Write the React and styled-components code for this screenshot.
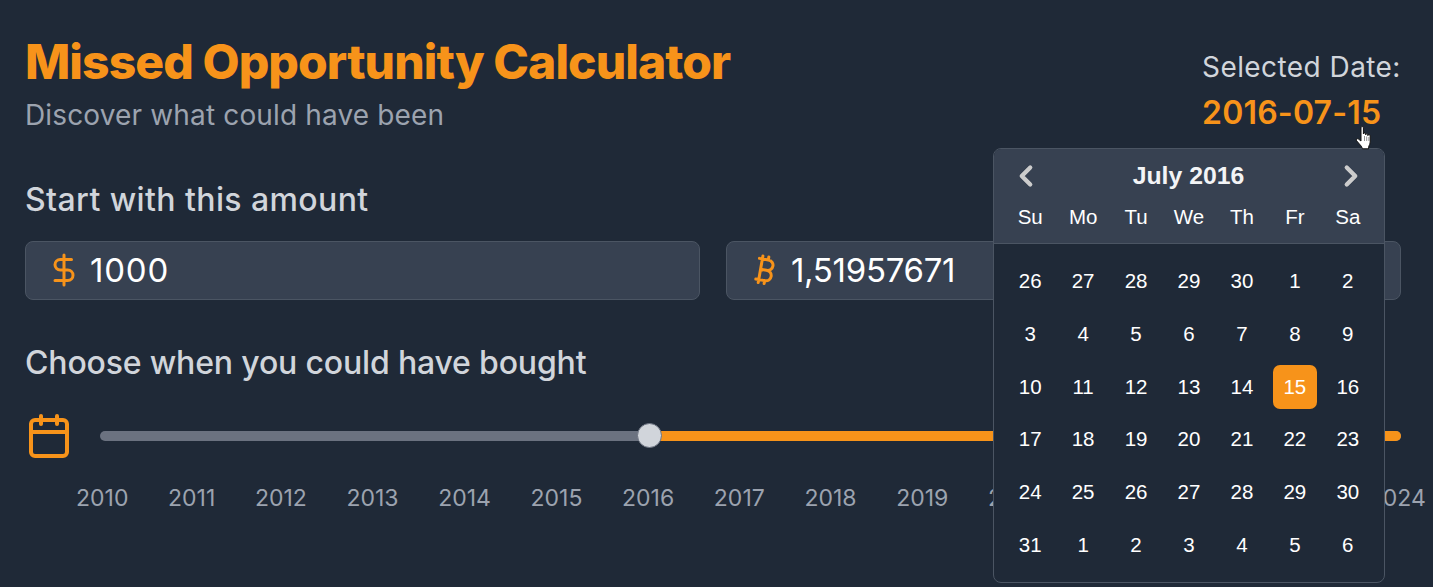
import React from 'react';
import styled, { createGlobalStyle } from 'styled-components';
import { Bitcoin, Calendar, ChevronLeft, ChevronRight, DollarSign } from 'lucide-react';

const orange = "#f7931a"
const panel = "#374151"
const line = "#4b5563"
const page = "#1f2937"

const Global = createGlobalStyle`
  html, body {
    margin: 0;
    height: 100%;
    overflow: hidden;
    background: ${page};
  }
`
const Page = styled.div`
  position: relative;
  width: 1433px;
  height: 587px;
  box-sizing: border-box;
  padding: 35px 32px 0 25px;
  font-family: Inter, sans-serif;
  color: #d1d5db;
`
const Header = styled.header`
  display: flex;
  justify-content: space-between;
  align-items: flex-start;
`
const Title = styled.h1`
  margin: 0;
  color: ${orange};
  font-size: 48px;
  line-height: 54px;
  font-weight: 800;
  letter-spacing: -0.91px;
`
const Tagline = styled.p`
  margin: 8px 0 0;
  color: #9ca3af;
  font-size: 28px;
  line-height: 36px;
  letter-spacing: 0.15px;
`
const DateBox = styled.div`
  width: 199px;
  padding-top: 14px;
`
const DateLabel = styled.div`
  font-size: 28px;
  line-height: 36px;
  letter-spacing: 0.43px;
  white-space: nowrap;
`
const DateValue = styled.div`
  margin-top: 10px;
  color: ${orange};
  font-size: 32px;
  line-height: 36px;
  font-weight: 600;
  letter-spacing: 0.2px;
  white-space: nowrap;
`
const Section = styled.h2`
  margin: ${p => p.$top}px 0 0;
  font-size: 32px;
  line-height: 40px;
  font-weight: 500;
  letter-spacing: ${p => p.$track}px;
`
const Inputs = styled.div`
  display: grid;
  grid-template-columns: 1fr 1fr;
  gap: 26px;
  margin-top: 21px;
`
const Field = styled.div`
  display: flex;
  align-items: center;
  gap: 8px;
  height: 59px;
  box-sizing: border-box;
  padding: 0 0 2px 20px;
  background: ${panel};
  border: 1px solid ${line};
  border-radius: 8px;
  color: #fff;
  font-size: 33px;
  letter-spacing: ${p => p.$track}px;
`
const FieldIcon = styled.span`
  display: flex;
  justify-content: center;
  flex: none;
  width: 36px;
  color: ${orange};
`
const SliderRow = styled.div`
  display: flex;
  align-items: center;
  gap: 27px;
  margin-top: 29px;
  svg { color: ${orange}; flex: none; }
`
const Track = styled.div`
  position: relative;
  flex: 1;
  height: 10px;
  background: #6b7280;
  border-radius: 5px;
`
const Fill = styled.div`
  position: absolute;
  top: 0;
  right: 0;
  bottom: 0;
  background: ${orange};
  border-radius: 0 5px 5px 0;
`
const Thumb = styled.div`
  position: absolute;
  top: -8px;
  width: 25px;
  height: 25px;
  margin-left: -12.5px;
  box-sizing: border-box;
  background: #d1d5db;
  border: 1px solid #6b7280;
  border-radius: 50%;
`
const Years = styled.div`
  display: flex;
  justify-content: space-between;
  margin: 22px -25px 0 51px;
  color: #9ca3af;
  font-size: 23px;
  line-height: 32px;
`
const Popover = styled.div`
  position: absolute;
  left: 993px;
  top: 148px;
  width: 392px;
  height: 435px;
  box-sizing: border-box;
  background: ${page};
  border: 1px solid ${line};
  border-radius: 8px;
  color: #fff;
  font-family: "Liberation Sans", Arial, sans-serif;
  overflow: hidden;
`
const CalHead = styled.div`
  background: ${panel};
  border-bottom: 1px solid ${line};
  height: 95px;
  box-sizing: border-box;
  padding: 8px 0 0;
`
const Month = styled.div`
  display: flex;
  align-items: center;
  justify-content: space-between;
  height: 38px;
  padding: 0 16px 0 15px;
  color: #f3f4f6;
  font-size: 24.8px;
  font-weight: 700;
  svg { color: #ccc; }
`
const Cols = styled.div`
  display: grid;
  grid-template-columns: repeat(7, 44px);
  column-gap: 8.95px;
  justify-content: center;
`
const DayName = styled.div`
  text-align: center;
  font-size: 20.5px;
  line-height: 30px;
  margin-top: 7px;
`
const Days = styled(Cols)`
  row-gap: 8.8px;
  margin-top: 15px;
`
const Day = styled.div`
  height: 44px;
  line-height: 44px;
  text-align: center;
  font-size: 20.5px;
  border-radius: 7px;
  background: ${p => p.$on ? orange : 'none'};
`
const Hand = styled.svg`
  position: absolute;
  left: 1355px;
  top: 125px;
`

const years = Array.from({ length: 15 }, (_, i) => 2010 + i)
const names = ['Su', 'Mo', 'Tu', 'We', 'Th', 'Fr', 'Sa']
const cells = [
  26, 27, 28, 29, 30, 1, 2,
  3, 4, 5, 6, 7, 8, 9,
  10, 11, 12, 13, 14, 15, 16,
  17, 18, 19, 20, 21, 22, 23,
  24, 25, 26, 27, 28, 29, 30,
  31, 1, 2, 3, 4, 5, 6,
]
const pos = 42.2

export default function App() {
  return <Page>
    <Global />
    <Header>
      <div>
        <Title>Missed Opportunity Calculator</Title>
        <Tagline>Discover what could have been</Tagline>
      </div>
      <DateBox>
        <DateLabel>Selected Date:</DateLabel>
        <DateValue>2016-07-15</DateValue>
      </DateBox>
    </Header>
    <Section $top={47} $track={0.4}>Start with this amount</Section>
    <Inputs>
      <Field $track={0.8}><FieldIcon><DollarSign size={36} /></FieldIcon>1000</Field>
      <Field $track={-0.3}><FieldIcon><Bitcoin size={38} /></FieldIcon>1,51957671</Field>
    </Inputs>
    <Section $top={43} $track={-0.17}>Choose when you could have bought</Section>
    <SliderRow>
      <Calendar size={48} />
      <Track>
        <Fill style={{ left: `${pos}%` }} />
        <Thumb style={{ left: `${pos}%` }} />
      </Track>
    </SliderRow>
    <Years>{years.map(y => <span key={y}>{y}</span>)}</Years>
    <Popover>
      <CalHead>
        <Month>
          <ChevronLeft size={34} strokeWidth={3} />
          July 2016
          <ChevronRight size={34} strokeWidth={3} />
        </Month>
        <Cols>{names.map(n => <DayName key={n}>{n}</DayName>)}</Cols>
      </CalHead>
      <Days>{cells.map((d, i) => <Day key={i} $on={i === 19}>{d}</Day>)}</Days>
    </Popover>
    <Hand width="18" height="26" viewBox="0 0 18 26">
      <path d="M7.200 1.500c.7 0 1.200.5 1.200 1.200V9c0-1.400 2.200-1.400 2.200 0v.8c0-1.300 2.200-1.300 2.200 0v.8c0-1.300 2.400-1.200 2.400.2V17c0 1.800-.7 3-1.300 4l-.4 2.800H7.500l-1.200-2.600-4.700-5.400c-1-1.300.5-2.800 1.900-1.700L6 16V2.700c0-.7.5-1.200 1.200-1.200z" fill="#fff" stroke="#111" strokeWidth="1" strokeLinejoin="round" />
      <path d="M9.500 11v5M11.700 11.500v4.500M13.900 12v4" stroke="#777" strokeWidth="0.8" fill="none" />
    </Hand>
  </Page>
}
